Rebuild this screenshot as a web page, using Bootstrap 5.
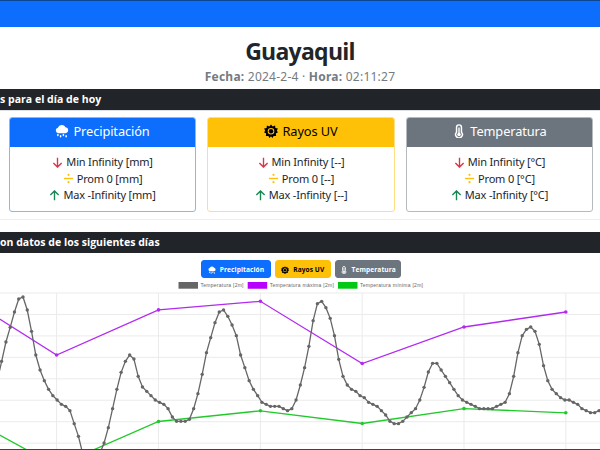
<!DOCTYPE html>
<html lang="es">
<head>
<meta charset="utf-8">
<meta name="viewport" content="width=device-width, initial-scale=1">
<title>Guayaquil</title>
<link href="https://cdn.jsdelivr.net/npm/bootstrap@5.3.0/dist/css/bootstrap.min.css" rel="stylesheet">
<style>
body{font-family:"Noto Sans","Open Sans",sans-serif;height:450px;color:#212529}
.topbar{height:27px;min-height:0;border-top:1px solid #0d4690}
.city-head{height:62px;padding-top:8px}
.city{font:700 23px/32px "Open Sans",sans-serif;letter-spacing:-.75px}
.stamp{font-size:12px;line-height:18px;margin-top:1px;color:#747b81;letter-spacing:.24px}
.section-bar{height:21px;font:700 10.5px/21px "Open Sans",sans-serif;white-space:nowrap;letter-spacing:.02px}
.today{padding:6px 7px 7px 9px;gap:11.3px;height:110px;border-top:1px solid #dee2e6;border-bottom:1px solid #eceeef}
.metric{--bs-card-border-radius:3px;--bs-card-inner-border-radius:2px;height:95px}
.metric.edge-blue{border-color:#8ab6f8}.metric.edge-gold{border-color:#ffdf86}.metric.edge-gray{border-color:#b5babf}
.metric .card-header{height:29px;font-size:12.8px;line-height:27px;border:0;letter-spacing:-.1px}
.metric .card-body{font-size:11px;line-height:16.7px;padding-top:7px;letter-spacing:-.18px}
.metric svg,.tab svg{fill:currentColor}
.metric .card-header svg{width:14px;height:14px;margin-right:4px;vertical-align:-2px}
.metric .card-body svg{width:11px;height:11px;margin-right:3px;vertical-align:-1.5px}
.tabs{height:29px;padding:7px 0 0 2px;gap:4px}
.tab{height:18px;font:700 6.6px/17px "Open Sans",sans-serif;padding:0;border-radius:3px;letter-spacing:.08px}
.tab svg{width:8px;height:8px;margin-right:4px;vertical-align:-1.5px}
.w-a{width:69.5px}.w-b{width:56px}.w-c{width:66px}
.chart{height:167px}
.chart text{font:5px "Liberation Sans",sans-serif;fill:#666}
.footline{height:1px;background:#34465a}
</style>
<script src="https://cdn.jsdelivr.net/npm/bootstrap@5.3.0/dist/js/bootstrap.bundle.min.js"></script>
</head>
<body class="overflow-hidden bg-white">
<svg class="d-none">
<symbol id="rain" viewBox="0 0 16 16"><path d="M4 10.5a3.2 3.2 0 0 1-.7-6.3A4.8 4.8 0 0 1 12 3.6a3.5 3.5 0 0 1 .4 6.9z"/><path d="M3.3 12v1.2M6.4 13.3v1.4M9.6 12v1.2M12.7 13.3v1.4" fill="none" stroke="currentColor" stroke-width="1.7" stroke-linecap="round"/></symbol>
<symbol id="sun" viewBox="0 0 16 16"><path fill-rule="evenodd" d="M8 .5l1.900 2.300 2.800-1.200.3 3 2.900.5-1.300 2.700L16 9.500l-2.500 1.300.4 3-2.900-.2L9.600 16 8 14 6.400 16 5 13.600l-2.900.2.4-3L0 9.500l1.400-1.700L.1 5.100 3 4.600l.3-3 2.800 1.200zM8 4.500a3.800 3.800 0 1 0 0 7.600 3.800 3.800 0 0 0 0-7.600z"/><circle cx="8" cy="8.300" r="2.500"/></symbol>
<symbol id="thermo" viewBox="0 0 16 16"><path d="M5.200 9.400V3.800a2.800 2.800 0 0 1 5.600 0v5.600a3.800 3.800 0 1 1-5.600 0z" fill="none" stroke="currentColor" stroke-width="1.700"/><circle cx="8" cy="12" r="2"/><path d="M7.200 4h1.600v8H7.200z"/></symbol>
<symbol id="down" viewBox="0 0 12 12"><path d="M6 .8v10M1.500 6.500L6 11l4.500-4.500" fill="none" stroke="currentColor" stroke-width="1.500"/></symbol>
<symbol id="up" viewBox="0 0 12 12"><path d="M6 11.200v-10M1.500 5.500L6 1l4.500 4.500" fill="none" stroke="currentColor" stroke-width="1.500"/></symbol>
<symbol id="div" viewBox="0 0 12 12"><path d="M1 6h10" stroke="currentColor" stroke-width="1.500"/><circle cx="6" cy="2" r="1.200"/><circle cx="6" cy="10" r="1.200"/></symbol>
</svg>
<nav class="navbar bg-primary p-0 topbar"></nav>
<header class="city-head text-center">
<h1 class="city m-0">Guayaquil</h1>
<div class="stamp"><b>Fecha:</b> 2024-2-4 · <b>Hora:</b> 02:11:27</div>
</header>
<div class="section-bar bg-dark text-white">s para el día de hoy</div>
<section class="today d-flex">
<div class="card metric edge-blue flex-fill w-100 text-center">
<div class="card-header text-bg-primary p-0"><svg><use href="#rain"/></svg>Precipitación</div>
<div class="card-body px-0 pb-0"><div><svg class="text-danger"><use href="#down"/></svg>Min Infinity [mm]</div><div><svg class="text-warning"><use href="#div"/></svg>Prom 0 [mm]</div><div><svg class="text-success"><use href="#up"/></svg>Max -Infinity [mm]</div></div>
</div>
<div class="card metric edge-gold flex-fill w-100 text-center">
<div class="card-header text-bg-warning p-0"><svg><use href="#sun"/></svg>Rayos UV</div>
<div class="card-body px-0 pb-0"><div><svg class="text-danger"><use href="#down"/></svg>Min Infinity [--]</div><div><svg class="text-warning"><use href="#div"/></svg>Prom 0 [--]</div><div><svg class="text-success"><use href="#up"/></svg>Max -Infinity [--]</div></div>
</div>
<div class="card metric edge-gray flex-fill w-100 text-center">
<div class="card-header text-bg-secondary p-0"><svg><use href="#thermo"/></svg>Temperatura</div>
<div class="card-body px-0 pb-0"><div><svg class="text-danger"><use href="#down"/></svg>Min Infinity [°C]</div><div><svg class="text-warning"><use href="#div"/></svg>Prom 0 [°C]</div><div><svg class="text-success"><use href="#up"/></svg>Max -Infinity [°C]</div></div>
</div>
</section>
<div class="pt-2 mt-1"><div class="section-bar bg-dark text-white">on datos de los siguientes días</div></div>
<div class="tabs d-flex justify-content-center">
<button class="btn btn-primary tab w-a"><svg><use href="#rain"/></svg>Precipitación</button>
<button class="btn btn-warning tab w-b"><svg><use href="#sun"/></svg>Rayos UV</button>
<button class="btn btn-secondary tab w-c"><svg><use href="#thermo"/></svg>Temperatura</button>
</div>
<svg class="chart d-block w-100" viewBox="0 282 600 167">
<g id="grid" stroke="#ebebeb" stroke-width="1"></g>
<path fill="#666" d="M178.500 282h19.500v6.700h-19.500z"/><path fill="#b700ff" d="M247.700 282h19.500v6.700h-19.500z"/><path fill="#00c814" d="M338 282h19.500v6.700H338z"/>
<text x="200.500" y="287.100" textLength="43">Temperatura [2m]</text><text x="269.800" y="287.100" textLength="64">Temperatura máxima [2m]</text><text x="360" y="287.100" textLength="63">Temperatura mínima [2m]</text>
<g id="series"></g>
</svg>
<div class="footline"></div>
<script>
const days=[56.6,158.5,260.4,362.2,464,565.8];
let g='';
days.forEach(x=>g+=`<path d="M${x} 293V449"/>`);
for(let i=0;i<8;i++)g+=`<path d="M0 ${293+i*21.45}H600"/>`;
document.getElementById('grid').innerHTML=g;
// hourly readings, in thirds of a pixel below y=250
const hourly=[390,334,276,232,186,147,141,180,244,315,360,392,418,437,450,463,469,482,521,559,611,640,650,640,611,579,533,476,418,367,334,315,327,379,411,424,437,450,457,463,476,501,514,514,514,508,476,431,373,308,263,218,186,180,199,225,257,315,353,392,418,437,457,463,469,469,469,476,482,476,450,405,353,289,212,161,154,173,205,257,328,379,405,418,424,437,443,457,463,469,482,495,514,521,521,514,501,488,476,450,412,366,340,340,360,379,398,418,437,450,457,463,469,476,476,476,476,469,463,457,431,379,308,257,238,231,244,283,347,392,418,431,443,450,450,457,463,476,482,488,488,482,476];
const pts=hourly.map((y,i)=>[(5+(i-1)*12.8)/3,250+y/3]);
function line(p,color,r){
  return `<polyline fill="none" stroke="${color}" stroke-width="1.3" points="${p.join(' ')}"/>`+
    p.map(q=>`<circle cx="${q[0]}" cy="${q[1]}" r="${r}" fill="${color}" stroke="none"/>`).join('');
}
const zip=(a)=>a.map((y,i)=>[i?days[i-1]:-45,y]);
document.getElementById('series').innerHTML=
 line(zip([291,355,309.9,301.3,363.5,327,312]),'#b22af0',1.8)+
 line(zip([411,466,421.5,410.8,423.5,408.6,412.8]),'#22c92c',1.8)+
 line(pts,'#666',1.7);
</script>
</body>
</html>
